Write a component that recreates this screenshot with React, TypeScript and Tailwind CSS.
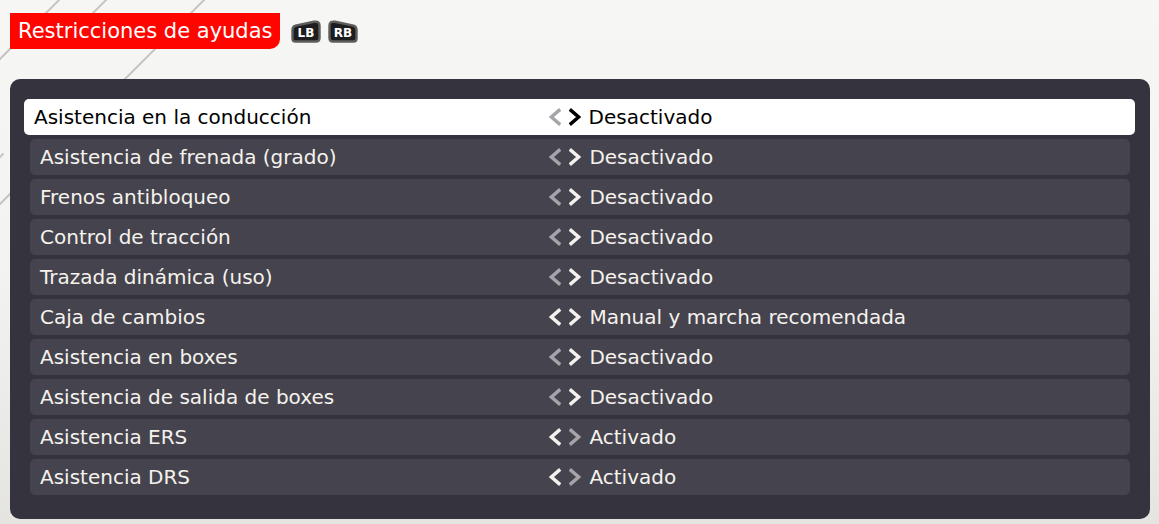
import { useState } from 'react'

type Setting = { label: string; options: string[]; initial: number }

const onOff = ['Desactivado', 'Activado']

const settings: Setting[] = [
  { label: 'Asistencia en la conducción', options: onOff, initial: 0 },
  { label: 'Asistencia de frenada (grado)', options: onOff, initial: 0 },
  { label: 'Frenos antibloqueo', options: onOff, initial: 0 },
  { label: 'Control de tracción', options: onOff, initial: 0 },
  { label: 'Trazada dinámica (uso)', options: onOff, initial: 0 },
  {
    label: 'Caja de cambios',
    options: ['Manual', 'Manual y marcha recomendada', 'Automática'],
    initial: 1,
  },
  { label: 'Asistencia en boxes', options: onOff, initial: 0 },
  { label: 'Asistencia de salida de boxes', options: onOff, initial: 0 },
  { label: 'Asistencia ERS', options: onOff, initial: 1 },
  { label: 'Asistencia DRS', options: onOff, initial: 1 },
]

function Chevron({ direction }: { direction: 'left' | 'right' }) {
  return (
    <svg viewBox="0 0 12 18" className="h-[18px] w-3" fill="none" stroke="currentColor" strokeWidth="3.4" aria-hidden="true">
      <path d={direction === 'left' ? 'M11.2 1.4 2.4 9l8.8 7.6' : 'M.8 1.4 9.6 9l-8.8 7.6'} />
    </svg>
  )
}

function BumperButton({ side }: { side: 'LB' | 'RB' }) {
  return (
    <button type="button" aria-label={side}>
      <svg viewBox="0 0 30 23" className="h-[23px] w-[30px]">
        <path
          d={
            side === 'LB'
              ? 'M1.5 10Q1.5 6.6 4.5 5.6L23 1.8Q28.5 1 28.5 5.5V18Q28.5 21.5 25 21.5H4.5Q1.5 21.5 1.5 18.5Z'
              : 'M28.5 10Q28.5 6.6 25.5 5.6L7 1.8Q1.5 1 1.5 5.5V18Q1.5 21.5 5 21.5H25.5Q28.5 21.5 28.5 18.5Z'
          }
          fill="#1d1d1f"
          stroke="#5d5d5c"
          strokeWidth="2.4"
        />
        <text
          x="15"
          y="17"
          textAnchor="middle"
          fill="#fff"
          className="font-['DejaVu_Sans',sans-serif] text-[12px] font-bold"
        >
          {side}
        </text>
      </svg>
    </button>
  )
}

function SettingRow({ setting, selected, onSelect }: { setting: Setting; selected: boolean; onSelect: () => void }) {
  const [index, setIndex] = useState(setting.initial)
  return (
    <li
      onClick={onSelect}
      className={
        selected
          ? '-ml-1.5 -mr-[5px] grid h-9 grid-cols-[4722fr_5278fr] items-center rounded-[5px] bg-white text-black'
          : 'grid h-9 grid-cols-[4722fr_5278fr] items-center rounded-[5px] bg-[#45444e] text-[#f5f2ed]'
      }
    >
      <span className="pl-2.5">{setting.label}</span>
      <div role="group" aria-label={setting.label} className="flex items-center">
        <button
          type="button"
          aria-label="Anterior"
          disabled={index === 0}
          onClick={() => setIndex(index - 1)}
          className="mr-2 disabled:text-[#a5a4a8]"
        >
          <Chevron direction="left" />
        </button>
        <button
          type="button"
          aria-label="Siguiente"
          disabled={index === setting.options.length - 1}
          onClick={() => setIndex(index + 1)}
          className="mr-2 disabled:text-[#a5a4a8]"
        >
          <Chevron direction="right" />
        </button>
        <span>{setting.options[index]}</span>
      </div>
    </li>
  )
}

export default function App() {
  const [selected, setSelected] = useState(0)
  return (
    <div className="relative isolate min-h-screen overflow-hidden bg-linear-to-b from-[#f6f6f4] via-[#f3f3f1] to-[#e5e4e1] px-2.5 pt-[13px] pb-[5px] font-['DejaVu_Sans',sans-serif] text-[20px] leading-7">
      <svg className="absolute top-0 left-0 -z-10 h-[220px] w-[220px]" viewBox="0 0 220 220" stroke="#c8c4c2" strokeWidth="2" fill="none" aria-hidden="true">
        <path d="M60-1-1 60M107-1 60 46M206-2-2 206" />
        <path d="M3 154-2 159" strokeLinecap="round" />
      </svg>

      <header className="flex items-center">
        <h1 className="flex h-9 items-center rounded-br-[10px] bg-[#ff0500] pr-[7px] pl-2 text-[21px] text-white">
          Restricciones de ayudas
        </h1>
        <div className="ml-[11px] flex gap-[7px]">
          <BumperButton side="LB" />
          <BumperButton side="RB" />
        </div>
      </header>

      <main className="mt-[30px] -mr-px rounded-[10px] bg-[#34333e] px-5 pt-5 pb-6">
        <ul className="flex flex-col gap-1">
          {settings.map((setting, i) => (
            <SettingRow key={setting.label} setting={setting} selected={i === selected} onSelect={() => setSelected(i)} />
          ))}
        </ul>
      </main>
    </div>
  )
}
